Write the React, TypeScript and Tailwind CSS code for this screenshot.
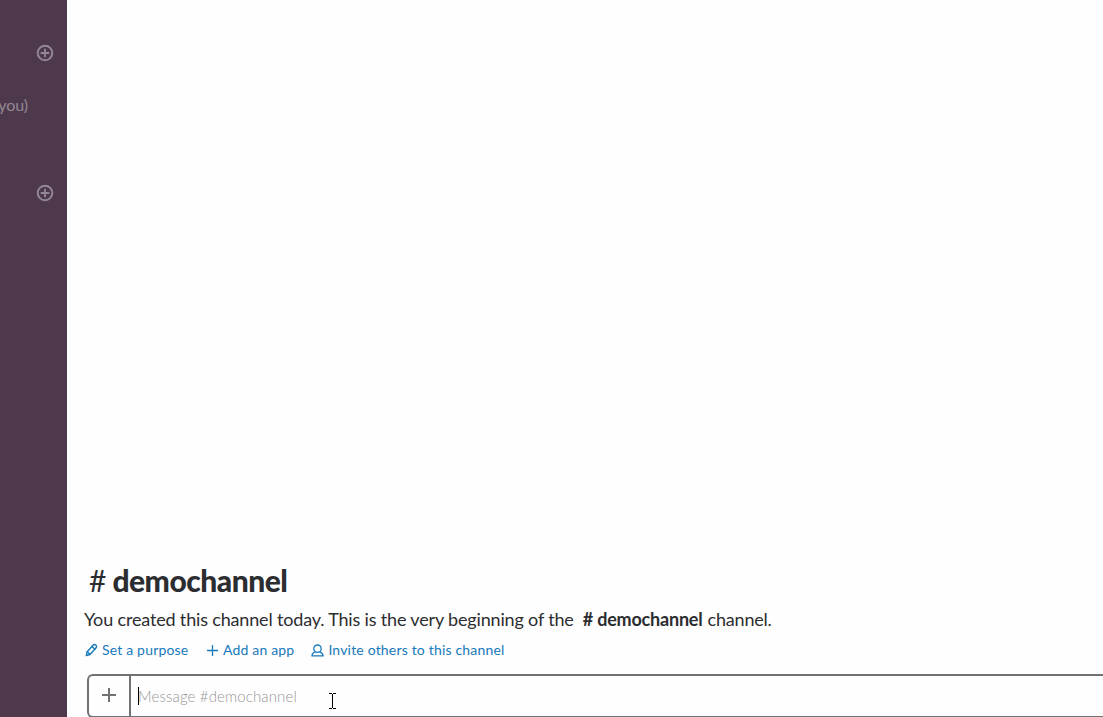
function CirclePlus() {
  return (
    <svg className="block size-[18px]" viewBox="0 0 18 18" fill="none" stroke="currentColor" strokeWidth="2">
      <circle cx="9" cy="9" r="7.300" />
      <path d="M9 4.700v8.600M4.700 9h8.600" strokeWidth="1.800" />
    </svg>
  );
}

function Pencil() {
  return (
    <svg className="block h-[14px] w-[13px]" viewBox="0 0 13 14" fill="none" stroke="currentColor" strokeWidth="1.4" strokeLinejoin="round" strokeLinecap="round">
      <path d="M1.300 12.600L2.200 8.700L8 2.300C8.900 1.300 9.900 1.300 10.800 2.100S11.800 4.100 10.900 5L5 11.500Z" />
      <path d="M7.100 3.500L9.800 6.200M2.400 8.800L4.900 11.300" />
    </svg>
  );
}

function Person() {
  return (
    <svg className="block h-[13px] w-[13px]" viewBox="0 0 13 13" fill="none" stroke="currentColor" strokeWidth="1.300" strokeLinejoin="round">
      <circle cx="6.500" cy="4.700" r="3.700" />
      <path d="M4.400 7.800C2.200 8.500 1 9.300 1 11.900h11c0-2.600-1.200-3.400-3.400-4.100" />
    </svg>
  );
}

export default function App() {
  return (
    <div className="flex h-[717px] w-full overflow-hidden bg-[#fefefe] font-['Lato',sans-serif] text-[#2c2d30]">
      <aside className="flex w-[67px] shrink-0 flex-col overflow-hidden bg-[#4d394b]">
        <div className="mt-[44px] flex justify-end pr-[13px] text-[#948894]"><CirclePlus /></div>
        <div className="mt-[31px] flex h-[24px] items-center justify-end pr-[39px] text-base tracking-[-0.1px] whitespace-nowrap text-[#948894]">(you)</div>
        <div className="mt-[67px] flex justify-end pr-[13px] text-[#948894]"><CirclePlus /></div>
      </aside>
      <main className="flex min-w-0 flex-1 flex-col pt-[560px]">
        <h1 className="flex h-[40px] shrink-0 items-center gap-[6px] pl-[22px] text-[30px] leading-[40px] whitespace-nowrap">
          <span className="font-normal">#</span>
          <span className="font-black tracking-[-0.500px]">demochannel</span>
        </h1>
        <p className="mt-[6px] flex h-[26px] shrink-0 items-center pl-[17px] text-[18px] leading-[26px] whitespace-nowrap">
          <span className="tracking-[-0.165px]">You created this channel today. This is the very beginning of the</span>
          <span className="ml-[9px] font-bold">#</span>
          <span className="ml-[4px] font-bold tracking-[-0.2px]">demochannel</span>
          <span className="ml-[5px] tracking-[-0.200px]">channel.</span>
        </p>
        <nav className="mt-[8px] flex h-[20px] shrink-0 items-center pl-[18px] text-[14px] leading-[20px] tracking-[0.180px] whitespace-nowrap text-[#1779ba]">
          <a className="flex items-center gap-[4px]"><Pencil /><span>Set a purpose</span></a>
          <a className="ml-[18.600px] flex items-center gap-[5px]">
            <svg className="block size-[11px]" viewBox="0 0 11 11" stroke="currentColor" strokeWidth="1.300"><path d="M5.500 0v11M0 5.500h11" /></svg>
            <span>Add an app</span>
          </a>
          <a className="ml-[17px] flex items-center gap-[4px]"><Person /><span>Invite others to this channel</span></a>
        </nav>
        <div className="mt-[14px] ml-[20px] flex h-[44px] shrink-0 rounded-l-[6px] border-2 border-r-0 border-[#717274] bg-[#fefefe]">
          <button className="flex w-[42px] shrink-0 items-center justify-center border-r-2 border-[#717274] pb-[2px] text-[#717274]">
            <svg className="block size-[14px]" viewBox="0 0 14 14" stroke="currentColor" strokeWidth="2"><path d="M7 0v14M0 7h14" /></svg>
          </button>
          <div className="relative flex flex-1 items-center pl-[7px] text-[15px] whitespace-nowrap text-[#969699]">
            <span className="h-[18px] w-px bg-black" />
            <span className="-ml-px font-light tracking-[0.140px]">Message #demochannel</span>
            <svg className="absolute top-[17px] left-[198px] h-[16px] w-[7px]" viewBox="0 0 7 16" fill="none" stroke="#000" shapeRendering="crispEdges">
              <path d="M0 .5h3M4 .5h3M3.500 1v14M0 15.500h3M4 15.500h3" />
            </svg>
          </div>
        </div>
      </main>
    </div>
  );
}
